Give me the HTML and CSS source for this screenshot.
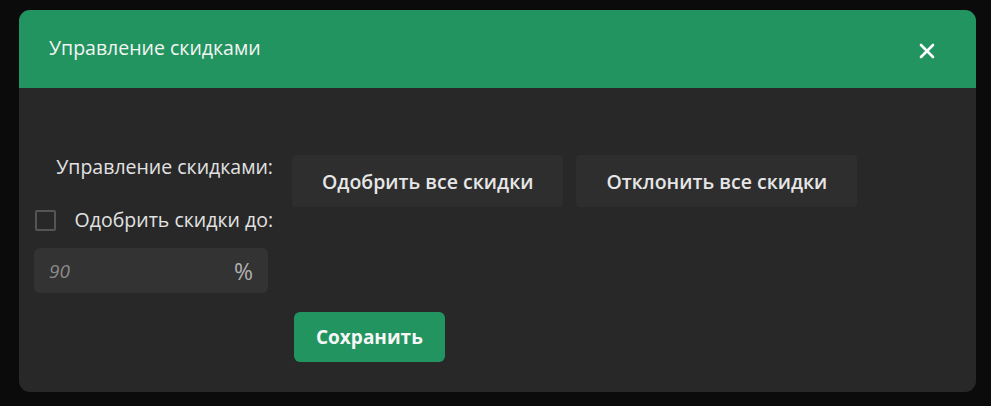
FILE: index.html
```html
<!DOCTYPE html>
<html lang="ru">
<head>
  <meta charset="UTF-8">
  <meta name="viewport" content="width=device-width, initial-scale=1.0">
  <title>Управление скидками</title>
  <link rel="stylesheet" href="styles.css">
</head>
<body>

  <div class="modal">
    <div class="modal-header">
      <h2>Управление скидками</h2>
      <button class="close" aria-label="Закрыть">
        <svg width="16" height="16" viewBox="0 0 16 16">
          <path d="M2 2 L14 14 M14 2 L2 14" stroke="#ffffff" stroke-width="2.6" stroke-linecap="round"/>
        </svg>
      </button>
    </div>

    <div class="modal-body">
      <div class="left">
        <div class="label">Управление скидками:</div>
        <label class="check-row">
          <span class="checkbox"></span>
          <span>Одобрить скидки до:</span>
        </label>
        <div class="percent-input">
          <input type="text" placeholder="90">
          <span class="unit">%</span>
        </div>
      </div>

      <div class="actions">
        <button class="btn-dark">Одобрить все скидки</button>
        <button class="btn-dark">Отклонить все скидки</button>
      </div>

      <div></div>
      <div>
        <button class="btn-save">Сохранить</button>
      </div>
    </div>
  </div>

</body>
</html>
```

FILE: styles.css
```css
body {
  font-family: "Open Sans", "Noto Sans", sans-serif;
  background-color: #0b0b0b;
  margin: 0;
  padding: 10px 15px 0 19px;
  color: #e2e2e2;
}

.modal {
  width: 957px;
  height: 382px;
  background: #282828;
  border-radius: 11px;
  overflow: hidden;
}

.modal-header {
  height: 78px;
  background: #229460;
  display: flex;
  align-items: center;
  justify-content: space-between;
  padding: 0 41px 0 30px;
}

.modal-header h2 {
  margin: 0;
  font-size: 19.5px;
  font-weight: 400;
  color: #f4f4f4;
  margin-top: -4px;
}

.close {
  background: none;
  border: none;
  padding: 0;
  width: 16px;
  height: 16px;
  margin-top: 4px;
  cursor: pointer;
}

.modal-body {
  display: grid;
  grid-template-columns: 239px auto;
  column-gap: 19px;
  row-gap: 19px;
  padding: 67px 15px 30px 15px;
}

.left {
  display: flex;
  flex-direction: column;
}

.label {
  text-align: right;
  font-size: 19.5px;
  line-height: 24px;
}

.check-row {
  display: flex;
  align-items: center;
  justify-content: space-between;
  margin-top: 29px;
  font-size: 19.5px;
  line-height: 24px;
}

.checkbox {
  width: 17px;
  height: 17px;
  margin-left: 1px;
  border: 2px solid #555555;
  border-radius: 2px;
}

.percent-input {
  display: flex;
  align-items: center;
  width: 234px;
  height: 45px;
  margin-top: 16px;
  background: #333333;
  border-radius: 6px;
  box-sizing: border-box;
  padding: 0 15px;
}

.percent-input input {
  flex: 1;
  min-width: 0;
  background: transparent;
  border: none;
  outline: none;
  color: #e2e2e2;
  font-family: inherit;
  font-size: 19px;
  padding: 0;
}

.percent-input input::placeholder {
  color: #8a8a8a;
  font-style: italic;
}

.unit {
  color: #b0b0b0;
  font-size: 23px;
}

.actions {
  display: flex;
  align-items: flex-start;
  gap: 13px;
}

.btn-dark {
  height: 52px;
  padding: 0 30px;
  background: #2e2e2e;
  border: none;
  border-radius: 4px;
  color: #e6e6e6;
  font-family: inherit;
  font-size: 19.5px;
  font-weight: 600;
}

.btn-save {
  height: 50px;
  margin-left: 2px;
  padding: 0 22px;
  background: #229460;
  border: none;
  border-radius: 6px;
  color: #f6f6f6;
  font-family: inherit;
  font-size: 19px;
  font-weight: 700;
}
```
